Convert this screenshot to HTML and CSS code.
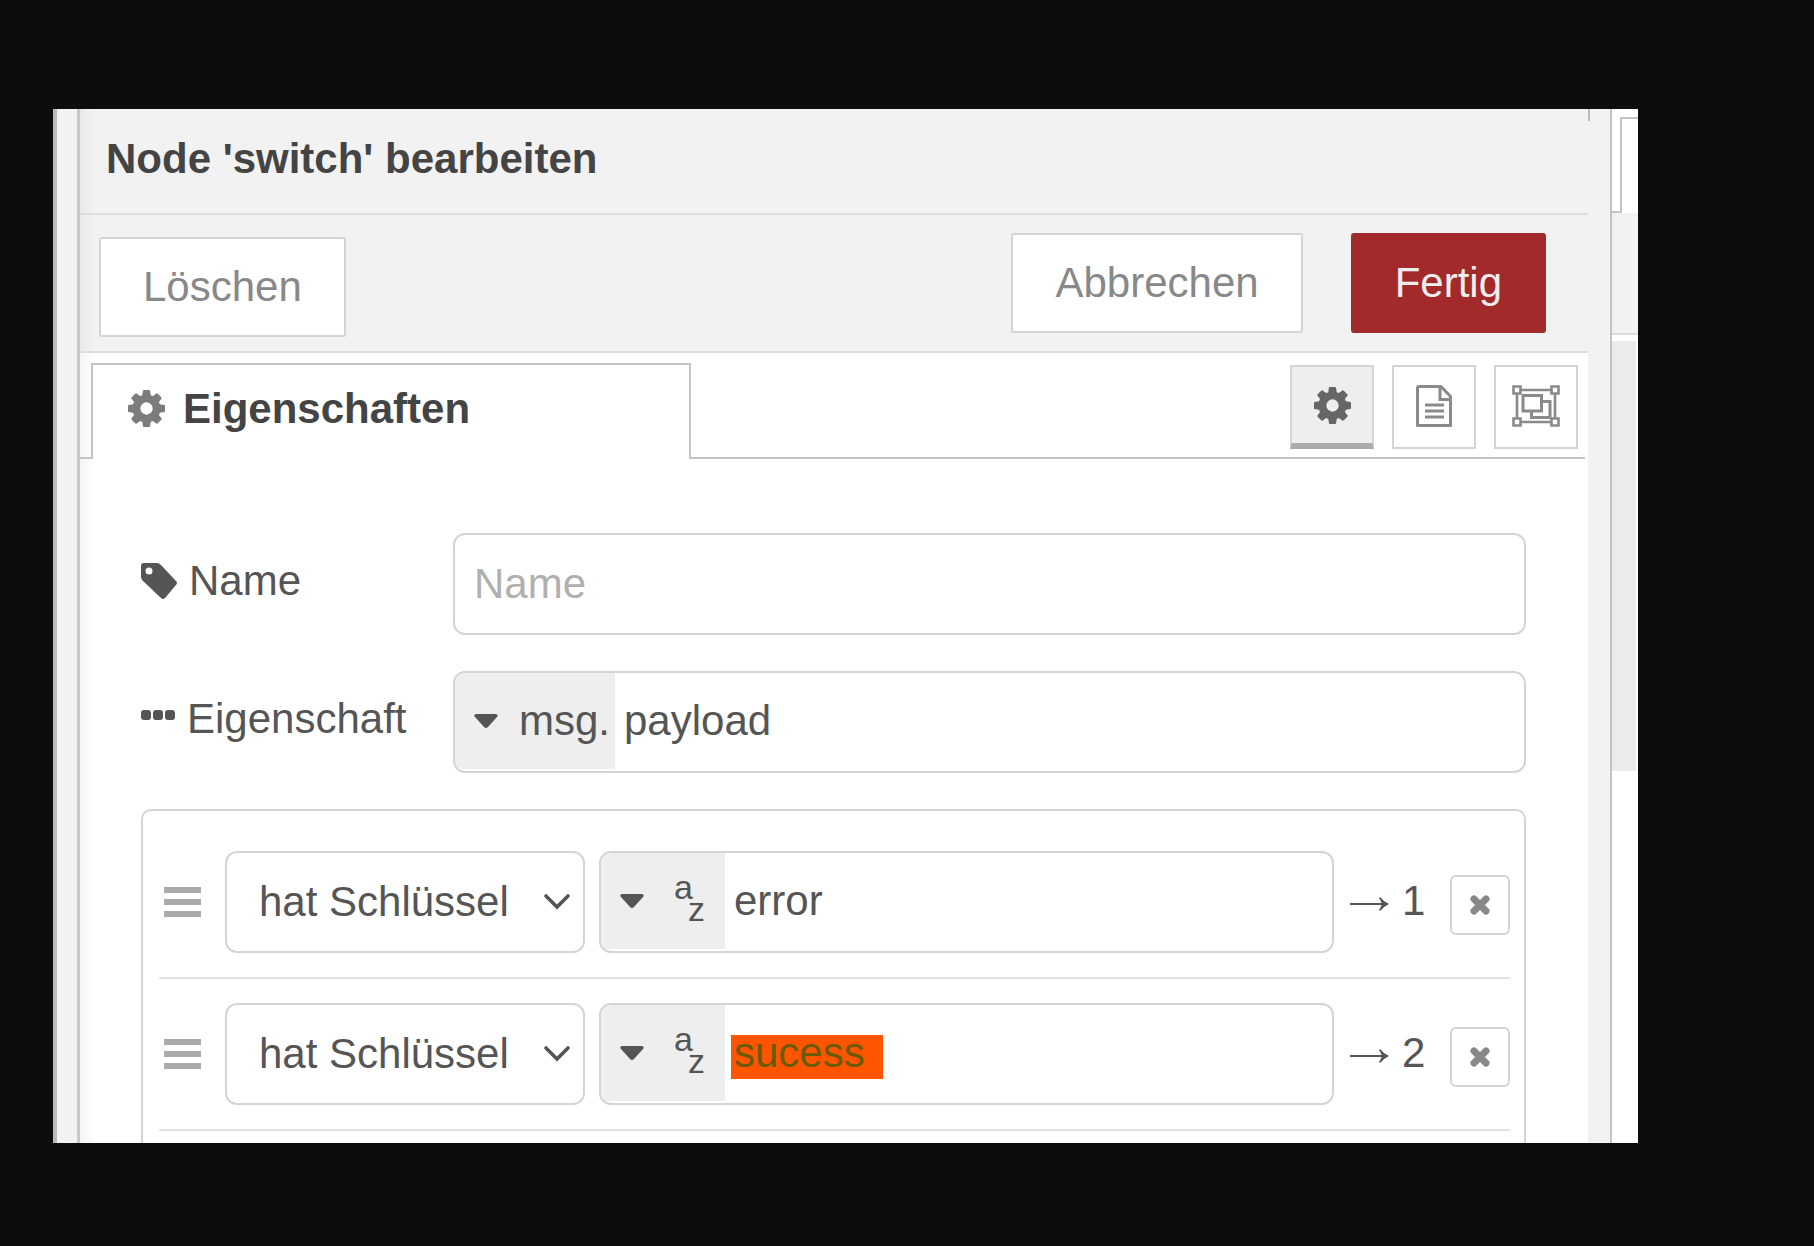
FILE: index.html
```html
<!DOCTYPE html>
<html lang="de">
<head>
<meta charset="utf-8">
<title>Node 'switch' bearbeiten</title>
<link rel="stylesheet" href="styles.css">
</head>
<body>
<svg class="sprite" aria-hidden="true">
  <symbol id="gear" viewBox="0 -128 1536 1536"><path fill-rule="evenodd" d="M768 384a256 256 0 1 0 0 512 256 256 0 1 0 0-512zM1536 531v222q0 12-8 23t-20 13l-185 28q-19 54-39 91 35 50 107 138 10 12 10 25t-9 23q-27 37-99 108t-94 71q-12 0-26-9l-138-108q-44 23-91 38-16 136-29 186-7 28-36 28h-222q-14 0-24.5-8.5t-11.500-21.500l-28-184q-49-16-90-37l-141 107q-10 9-25 9-14 0-25-11-126-114-165-168-7-10-7-23 0-12 8-23 15-21 51-66.500t54-70.500q-27-50-41-99l-183-27q-13-2-21-12.500t-8-23.500v-222q0-12 8-23t19-13l186-28q14-46 39-92-40-57-107-138-10-12-10-24 0-10 9-23 26-36 98.500-107.500t94.500-71.500q13 0 26 10l138 107q44-23 91-38 16-136 29-186 7-28 36-28h222q14 0 24.500 8.500t11.500 21.500l28 184q49 16 90 37l142-107q9-9 24-9 13 0 25 10 129 119 165 170 7 8 7 22 0 12-8 23-15 21-51 66.500t-54 70.500q26 50 41 98l183 28q13 2 21 12.500t8 23.500z"/></symbol>
  <symbol id="caret" viewBox="0 0 24 14"><path d="M2 0h20q3 1 1 3L14 13q-2 2-4 0L1 3q-2-2 1-3z"/></symbol>
  <symbol id="chevron" viewBox="0 0 28 18"><path d="M3 3l11 11L25 3" fill="none" stroke="currentColor" stroke-width="3.6" stroke-linecap="round"/></symbol>
  <symbol id="grip" viewBox="0 0 37 30"><path d="M0 0h37v6H0zM0 12h37v6H0zM0 24h37v6H0z"/></symbol>
  <symbol id="arrow" viewBox="0 0 40 16"><path d="M0 8h37" fill="none" stroke="currentColor" stroke-width="2"/><path d="M30 1q3 4 9 7-6 3-9 7l-1-1q2-3 3-6-1-3-3-6z"/></symbol>
  <symbol id="cross" viewBox="0 0 20 20"><path d="M4 4l12 12M16 4L4 16" fill="none" stroke="currentColor" stroke-width="7" stroke-linecap="round"/></symbol>
</svg>

<main class="window">
  <div class="gutter gutter-left"></div>

  <form class="editor">
    <header class="editor-header"><h1>Node 'switch' bearbeiten</h1></header>

    <div class="toolbar">
      <button type="button" class="btn btn-delete">Löschen</button>
      <span class="spacer"></span>
      <button type="button" class="btn">Abbrechen</button>
      <button type="button" class="btn btn-primary">Fertig</button>
    </div>

    <div class="tabs">
      <span class="tabs-lead"></span>
      <button type="button" class="tab">
        <svg class="tab-icon"><use href="#gear"/></svg>
        Eigenschaften
      </button>
      <div class="tabs-rest">
        <button type="button" class="icon-btn active" aria-label="Eigenschaften">
          <svg width="37" height="37"><use href="#gear"/></svg>
        </button>
        <button type="button" class="icon-btn" aria-label="Beschreibung">
          <svg class="line-icon" width="36" height="42" viewBox="0 0 36 42" stroke-width="3"><path d="M3 1.500h22l9.500 10V40.500H1.500V3q0-1.500 1.500-1.500z" stroke-linejoin="round"/><path d="M24 2v12.500h11M9 20h19M9 26h19M9 32h19"/></svg>
        </button>
        <button type="button" class="icon-btn" aria-label="Darstellung">
          <svg class="line-icon" width="48" height="42" viewBox="0 0 48 42" stroke-width="2.600"><path d="M1.500 1.500h7v7h-7zM39.500 1.500h7v7h-7zM1.500 33.500h7v7h-7zM39.500 33.500h7v7h-7zM8.500 5h31M8.500 37h31M5 8.500v25M43 8.500v25"/><path d="M11 10.500h18.500v15.500H11zM29.500 16.500H38V32.500H19.500V26" stroke-width="3"/></svg>
        </button>
      </div>
    </div>

    <div class="fields">
      <div class="field">
        <label class="label" for="node-name">
          <svg width="36" height="36" viewBox="0 0 36 36"><path fill-rule="evenodd" d="M3 0h13q2 0 4 2l15 16q2 2 0 4L24 35q-2 2-4 0L2 18q-2-2-2-4V3q0-3 3-3zM8 4.500a3.500 3.500 0 1 0 0 7 3.500 3.500 0 1 0 0-7z"/></svg>
          Name
        </label>
        <input class="text-input" id="node-name" type="text" placeholder="Name">
      </div>

      <div class="field">
        <label class="label" for="node-property">
          <svg width="34" height="18" viewBox="0 0 34 18"><rect width="10" height="10" rx="3"/><rect x="12" width="10" height="10" rx="3"/><rect x="24" width="10" height="10" rx="3"/></svg>
          Eigenschaft
        </label>
        <div class="typed">
          <button type="button" class="type-btn">
            <svg width="24" height="14"><use href="#caret"/></svg>
            msg.
          </button>
          <input class="typed-input" id="node-property" type="text" value="payload">
        </div>
      </div>

      <ol class="rules">
        <li class="rule">
          <svg class="grip"><use href="#grip"/></svg>
          <div class="select">
            <select aria-label="Bedingung 1"><option>hat Schlüssel</option></select>
            <svg class="chevron"><use href="#chevron"/></svg>
          </div>
          <div class="typed">
            <button type="button" class="type-btn type-string" aria-label="Zeichenkette">
              <svg width="24" height="14"><use href="#caret"/></svg>
              <span class="az"><span>a</span><span class="az-low">z</span></span>
            </button>
            <input class="typed-input" type="text" value="error" aria-label="Wert 1">
          </div>
          <div class="output"><svg class="arrow"><use href="#arrow"/></svg><span>1</span></div>
          <button type="button" class="remove" aria-label="Entfernen"><svg width="20" height="20"><use href="#cross"/></svg></button>
        </li>
        <li class="rule">
          <svg class="grip"><use href="#grip"/></svg>
          <div class="select">
            <select aria-label="Bedingung 2"><option>hat Schlüssel</option></select>
            <svg class="chevron"><use href="#chevron"/></svg>
          </div>
          <div class="typed">
            <button type="button" class="type-btn type-string" aria-label="Zeichenkette">
              <svg width="24" height="14"><use href="#caret"/></svg>
              <span class="az"><span>a</span><span class="az-low">z</span></span>
            </button>
            <input class="typed-input marked" type="text" value="sucess" aria-label="Wert 2">
          </div>
          <div class="output"><svg class="arrow"><use href="#arrow"/></svg><span>2</span></div>
          <button type="button" class="remove" aria-label="Entfernen"><svg width="20" height="20"><use href="#cross"/></svg></button>
        </li>
      </ol>
    </div>
  </form>

  <div class="gutter gutter-right"><div class="tick"></div></div>

  <aside class="sidebar">
    <div class="side-tabs"><span class="side-lead"></span><span class="side-tab"></span></div>
    <div class="side-toolbar"></div>
    <div class="side-block"></div>
  </aside>
</main>
</body>
</html>
```

FILE: styles.css
```css
* {
  box-sizing: border-box;
}

body {
  margin: 0;
  min-height: 100vh;
  padding: 109px 176px 103px 53px;
  background: #0d0d0d;
  color: #555;
  font: 42px/48px "Liberation Sans", Arial, sans-serif;
}

button,
input,
select {
  margin: 0;
  font: inherit;
  color: inherit;
}

svg {
  flex: none;
  fill: currentColor;
}

.sprite {
  display: none;
}

.line-icon {
  fill: none;
  stroke: currentColor;
}

.window {
  display: flex;
  background: #fff;
}

.gutter {
  flex: none;
  background: #f2f2f2;
}

.gutter-left {
  width: 27px;
  border-left: 4px solid #bbb;
  border-right: 3px solid #c8c8c8;
}

.gutter-right {
  width: 24px;
  border-right: 2px solid #c4c4c4;
}

.tick {
  width: 2px;
  height: 12px;
  background: #bbb;
}

/* Editor */

.editor {
  flex: 1;
  min-width: 0;
  background: linear-gradient(90deg, #f4f4f4, #fff 14px);
}

.editor-header {
  padding: 26px 26px 30px;
  background: linear-gradient(90deg, #e8e8e8, #f2f2f2 14px);
  border-bottom: 2px solid #ddd;
}

h1 {
  margin: 0;
  font: inherit;
  font-weight: bold;
  color: #444;
}

.toolbar {
  display: flex;
  align-items: flex-start;
  padding: 18px 42px 14px 19px;
  background: linear-gradient(90deg, #e8e8e8, #f2f2f2 14px);
  border-bottom: 2px solid #ddd;
}

.spacer {
  flex: 1;
}

.btn {
  height: 100px;
  padding: 0 42px;
  background: #fff;
  border: 2px solid #d4d4d4;
  border-radius: 3px;
  color: #888;
}

.btn-delete {
  margin-top: 4px;
}

.btn-primary {
  margin-left: 48px;
  background: #a22a2a;
  border-color: #a22a2a;
  color: #eee;
}

.tabs {
  display: flex;
  align-items: stretch;
  height: 106px;
  padding: 10px 3px 0 0;
}

.tabs-lead {
  width: 11px;
  border-bottom: 2px solid #c4c4c4;
}

.tab {
  display: flex;
  align-items: center;
  gap: 18px;
  width: 600px;
  padding: 0 35px 7px;
  background: #fff;
  border: 2px solid #c4c4c4;
  border-bottom: 0;
  font-weight: bold;
  color: #444;
}

.tab-icon {
  width: 37px;
  height: 37px;
  color: #7c7c7c;
}

.tabs-rest {
  flex: 1;
  display: flex;
  justify-content: flex-end;
  gap: 18px;
  padding: 2px 7px 0 0;
  border-bottom: 2px solid #c4c4c4;
}

.icon-btn {
  display: flex;
  align-items: center;
  justify-content: center;
  width: 84px;
  height: 84px;
  padding: 0 0 2px;
  background: #fff;
  border: 2px solid #d4d4d4;
  color: #8a8a8a;
}

.icon-btn.active {
  padding: 0;
  background: #eee;
  border-bottom: 6px solid #aaa;
  color: #666;
}

/* Form */

.fields {
  display: flex;
  flex-direction: column;
  gap: 36px;
  padding: 74px 62px 0 61px;
}

.field {
  display: flex;
}

.label {
  flex: none;
  display: flex;
  align-items: center;
  gap: 12px;
  width: 312px;
  padding-bottom: 6px;
}

.text-input {
  flex: 1;
  min-width: 0;
  height: 102px;
  padding: 0 19px;
  background: #fff;
  border: 2px solid #d4d4d4;
  border-radius: 12px;
}

.text-input::placeholder {
  color: #b0b0b0;
  opacity: 1;
}

.typed {
  flex: 1;
  display: flex;
  align-items: center;
  min-width: 0;
  height: 102px;
  padding-bottom: 2px;
  background: #fff;
  border: 2px solid #d4d4d4;
  border-radius: 12px;
  overflow: hidden;
}

.type-btn {
  flex: none;
  display: flex;
  align-items: center;
  gap: 21px;
  width: 160px;
  height: 96px;
  padding: 0 0 0 19px;
  background: #eee;
  border: 0;
}

.type-string {
  gap: 30px;
  width: 124px;
}

.az {
  display: flex;
  flex-direction: column;
  align-items: flex-start;
  width: 31px;
  padding-bottom: 6px;
  font-size: 34px;
  line-height: 22px;
}

.az-low {
  align-self: flex-end;
}

.typed-input {
  flex: 1;
  min-width: 0;
  height: 48px;
  padding: 0 9px;
  background: none;
  border: 0;
}

.marked {
  flex: none;
  width: 152px;
  height: 44px;
  margin: 8px 0 0 6px;
  padding: 0 3px 8px;
  background: #f50;
  line-height: 36px;
  color: #6b5a00;
}

.rules {
  margin: 0;
  padding: 16px 14px 12px 16px;
  border: 2px solid #d4d4d4;
  border-bottom: 0;
  border-radius: 10px 10px 0 0;
  list-style: none;
}

.rule {
  display: flex;
  align-items: center;
  padding: 24px 0 24px 5px;
  border-bottom: 2px solid #e2e2e2;
}

.grip {
  width: 37px;
  height: 30px;
  color: #aaa;
}

.select {
  position: relative;
  width: 360px;
  height: 102px;
  margin: 0 14px 0 24px;
}

.select select {
  appearance: none;
  width: 100%;
  height: 100%;
  padding: 0 32px;
  background: #fff;
  border: 2px solid #d4d4d4;
  border-radius: 12px;
}

.chevron {
  position: absolute;
  top: 42px;
  right: 14px;
  width: 28px;
  height: 18px;
  pointer-events: none;
}

.output {
  display: flex;
  align-items: center;
  gap: 12px;
  width: 116px;
  padding: 0 0 2px 16px;
}

.arrow {
  width: 40px;
  height: 16px;
  margin-top: 6px;
}

.remove {
  display: flex;
  align-items: center;
  justify-content: center;
  width: 60px;
  height: 60px;
  margin-top: 6px;
  padding: 0;
  background: #fff;
  border: 2px solid #d4d4d4;
  border-radius: 6px;
  color: #888;
}

/* Sidebar behind the editor */

.sidebar {
  flex: none;
  width: 26px;
}

.side-tabs {
  display: flex;
  height: 104px;
  padding-top: 8px;
}

.side-lead {
  width: 8px;
  border-bottom: 2px solid #c4c4c4;
}

.side-tab {
  flex: 1;
  border: solid #c4c4c4;
  border-width: 2px 0 0 2px;
}

.side-toolbar {
  height: 122px;
  background: #f2f2f2;
  border-bottom: 2px solid #ddd;
}

.side-block {
  height: 430px;
  margin: 6px 2px 0 0;
  background: #ebebeb;
}
```
